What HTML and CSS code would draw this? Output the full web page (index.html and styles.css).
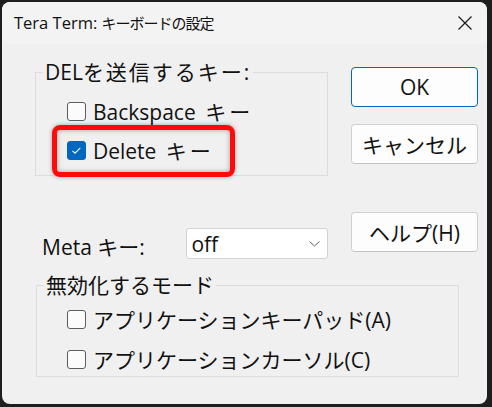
FILE: index.html
```html
<!DOCTYPE html>
<html lang="ja">
<head>
<meta charset="utf-8">
<title>Tera Term: キーボードの設定</title>
<link rel="stylesheet" href="styles.css">
</head>
<body>
<div class="window">
  <div class="titlebar">
    <span class="title">Tera Term: <span class="title-ja">キーボードの設定</span></span>
    <span class="close">
      <svg width="14" height="14" viewBox="0 0 14 14"><path d="M0.5 0.5 L13.5 13.5 M13.5 0.5 L0.5 13.5" stroke="#1a1a1a" stroke-width="1.2" fill="none"/></svg>
    </span>
  </div>
  <div class="content">
    <div class="top">
      <div class="left">
        <fieldset class="group g1">
          <legend>DEL<span class="wide">を送信するキー:</span></legend>
          <div class="check"><span class="box"></span><span>Backspace <span class="key">キー</span></span></div>
          <div class="check on">
            <span class="box"><svg width="19" height="19" viewBox="0 0 19 19"><path d="M5.5 9.8 L8 12.2 L13.3 6.9" stroke="#fff" stroke-width="1.1" fill="none"/></svg></span>
            <span>Delete <span class="key">キー</span></span>
            <span class="highlight"></span>
          </div>
        </fieldset>
        <div class="meta">
          <span class="meta-label">Meta キー:</span>
          <div class="select">
            <span>off</span>
            <svg width="11" height="6" viewBox="0 0 11 6"><path d="M0.5 0.5 L5.5 5 L10.5 0.5" stroke="#606060" stroke-width="1" fill="none"/></svg>
          </div>
        </div>
      </div>
      <div class="buttons">
        <div class="btn default">OK</div>
        <div class="btn cancel">キャンセル</div>
        <div class="btn help">ヘルプ(H)</div>
      </div>
    </div>
    <fieldset class="group g2">
      <legend>無効化するモード</legend>
      <div class="check"><span class="box"></span><span>アプリケーションキーパッド(A)</span></div>
      <div class="check"><span class="box"></span><span>アプリケーションカーソル(C)</span></div>
    </fieldset>
  </div>
</div>
</body>
</html>
```

FILE: styles.css
```css
html, body {
  margin: 0;
  padding: 0;
}
body {
  background: #1e1e1e;
  width: 492px;
  height: 407px;
  overflow: hidden;
  font-family: "Open Sans", "Noto Sans CJK JP", sans-serif;
  color: #111;
}
.window {
  margin: 2px 0 0 2px;
  width: 485px;
  height: 402px;
  border-radius: 8px;
  background: #f0f0f0;
  overflow: hidden;
}
.titlebar {
  height: 42px;
  background: #f3f3f3;
  display: flex;
  align-items: center;
  justify-content: space-between;
  padding: 0 0 0 12px;
}
.title {
  font-size: 16.5px;
  line-height: 20px;
  white-space: nowrap;
}
.title-ja {
  font-size: 15px;
  letter-spacing: -1px;
}
.close {
  width: 44px;
  display: flex;
  justify-content: center;
}
.close svg { display: block; }
.content {
  padding: 16px 0 0 33px;
  font-size: 21px;
}
.top {
  display: flex;
  align-items: flex-start;
}
.left {
  width: 293px;
}
.group {
  margin: 0;
  padding: 0;
  border: 1px solid #dcdcdc;
  min-width: 0;
}
.group legend {
  margin-left: 7px;
  padding: 0 2px;
  line-height: 24px;
  font-size: 21px;
}
.wide {
  letter-spacing: 2px;
}
.key {
  margin-left: 4px;
  letter-spacing: 3px;
}
.g1 {
  padding-top: 10px;
  padding-bottom: 8px;
}
.check {
  position: relative;
  display: flex;
  align-items: center;
  height: 34px;
  margin-left: 31px;
  white-space: nowrap;
}
.check + .check {
  margin-top: 5px;
}
.box {
  width: 19px;
  height: 19px;
  box-sizing: border-box;
  border: 1px solid #5c5c5c;
  border-radius: 3px;
  background: #fbfbfb;
  margin-right: 7px;
  flex: none;
  position: relative;
}
.box svg {
  position: absolute;
  left: -1px;
  top: -1px;
}
.check.on .box {
  background: #0067c0;
  border-color: #0067c0;
}
.highlight {
  position: absolute;
  left: -15px;
  top: -8px;
  width: 183px;
  height: 52px;
  box-sizing: border-box;
  border: 5px solid #ff0a0a;
  border-radius: 8px;
  box-shadow: 0 0 4px rgba(0, 0, 0, 0.35), inset 0 0 5px rgba(0, 0, 0, 0.35);
}
.meta {
  margin-top: 52px;
  display: flex;
  align-items: center;
  height: 31px;
}
.meta-label {
  width: 145px;
  padding-left: 7px;
  padding-top: 4px;
}
.select {
  width: 142px;
  height: 31px;
  box-sizing: border-box;
  background: #fff;
  border: 1px solid #d2d2d2;
  border-radius: 3px;
  display: flex;
  align-items: center;
  justify-content: space-between;
  padding: 0 7px 0 4px;
}
.buttons {
  margin-left: 23px;
  margin-top: 7px;
  width: 127px;
  display: flex;
  flex-direction: column;
}
.btn {
  height: 40px;
  box-sizing: border-box;
  background: #fdfdfd;
  border: 1px solid #d0d0d0;
  border-bottom-color: #c2c2c2;
  border-radius: 4px;
  display: flex;
  align-items: center;
  justify-content: center;
}
.btn.default {
  border-color: #0067c0;
}
.btn.cancel {
  margin-top: 17px;
}
.btn.help {
  margin-top: 48px;
}
.g2 {
  margin-top: 14px;
  margin-left: 1px;
  width: 423px;
  box-sizing: border-box;
  padding-top: 5px;
  padding-bottom: 0;
}
.g2 .check {
  margin-left: 30px;
}
.g2 .check + .check {
  margin-top: 6px;
}
```
